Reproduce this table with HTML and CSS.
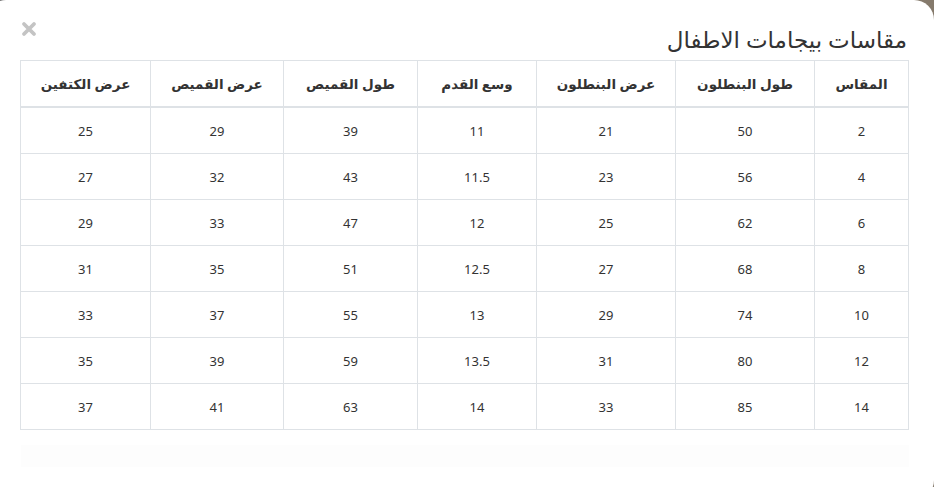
FILE: index.html
```html
<!DOCTYPE html>
<html lang="ar" dir="rtl">
<head>
<meta charset="utf-8">
<title>مقاسات بيجامات الاطفال</title>
<link rel="stylesheet" href="styles.css">
</head>
<body>
<div class="modal">
  <div class="modal-header">
    <h4 class="modal-title">مقاسات بيجامات الاطفال</h4>
    <button class="close" type="button" aria-label="إغلاق">
      <svg width="16" height="16" viewBox="0 0 16 16"><path d="M3 3 L13 13 M13 3 L3 13" stroke="#c4c4c4" stroke-width="3.8" stroke-linecap="round"/></svg>
    </button>
  </div>
  <table class="sizes">
    <colgroup>
      <col class="c1"><col class="c2"><col class="c3"><col class="c4"><col class="c5"><col class="c6"><col class="c7">
    </colgroup>
    <thead>
      <tr><th>المقاس</th><th>طول البنطلون</th><th>عرض البنطلون</th><th>وسع القدم</th><th>طول القميص</th><th>عرض القميص</th><th>عرض الكتفين</th></tr>
    </thead>
    <tbody>
      <tr><td>2</td><td>50</td><td>21</td><td>11</td><td>39</td><td>29</td><td>25</td></tr>
      <tr><td>4</td><td>56</td><td>23</td><td>11.5</td><td>43</td><td>32</td><td>27</td></tr>
      <tr><td>6</td><td>62</td><td>25</td><td>12</td><td>47</td><td>33</td><td>29</td></tr>
      <tr><td>8</td><td>68</td><td>27</td><td>12.5</td><td>51</td><td>35</td><td>31</td></tr>
      <tr><td>10</td><td>74</td><td>29</td><td>13</td><td>55</td><td>37</td><td>33</td></tr>
      <tr><td>12</td><td>80</td><td>31</td><td>13.5</td><td>59</td><td>39</td><td>35</td></tr>
      <tr><td>14</td><td>85</td><td>33</td><td>14</td><td>63</td><td>41</td><td>37</td></tr>
    </tbody>
  </table>
  <div class="modal-footer"></div>
</div>
</body>
</html>
```
FILE: styles.css
```css
html, body {
  margin: 0;
  padding: 0;
}
body {
  width: 934px;
  height: 487px;
  overflow: hidden;
  background: linear-gradient(90deg, #6f6f6f 0%, #857a6c 100%);
  font-family: "Noto Sans", "DejaVu Sans", sans-serif;
  color: #333;
}
.modal {
  box-sizing: border-box;
  width: 948px;
  height: 500px;
  margin-left: -14px;
  padding: 0 25px 0 35px;
  background: #fff;
  border-radius: 20px;
  direction: rtl;
}
.modal-header {
  height: 60px;
  display: flex;
  justify-content: space-between;
  align-items: flex-start;
}
.modal-title {
  margin: 23px 2px 0 0;
  font-size: 23px;
  font-weight: normal;
  line-height: 32px;
  color: #333;
}
.close {
  margin: 21px 0 0 0;
  padding: 0;
  border: 0;
  background: none;
  width: 16px;
  height: 16px;
  display: flex;
}
.sizes {
  width: 888px;
  border-collapse: collapse;
  table-layout: fixed;
  font-size: 13px;
  color: #333;
}
.c1 { width: 94px; }
.c2 { width: 139px; }
.c3 { width: 139px; }
.c4 { width: 119px; }
.c5 { width: 134px; }
.c6 { width: 133px; }
.c7 { width: 130px; }
.sizes th, .sizes td {
  border: 1px solid #dee2e6;
  text-align: center;
  vertical-align: middle;
  padding: 0;
}
.sizes th {
  height: 45px;
  font-size: 13.5px;
  font-weight: bold;
  border-bottom-width: 2px;
}
.sizes td {
  height: 45px;
}
.modal-footer {
  margin-top: 15px;
  height: 22px;
  background: #fdfdfd;
}
```
